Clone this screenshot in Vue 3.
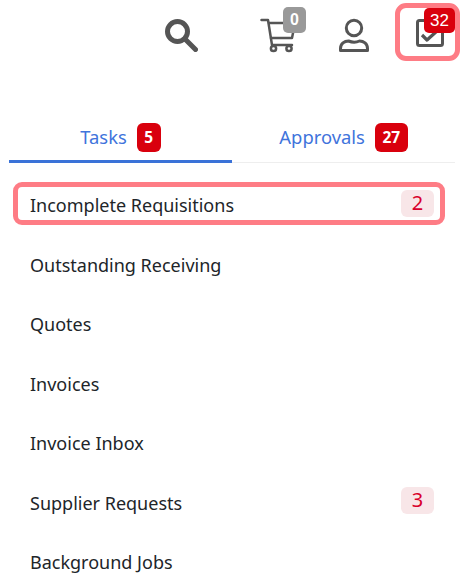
<template>
  <div class="page">
    <div class="topbar">
      <button class="icon-btn search">
        <svg width="33" height="33" viewBox="0 0 33 33" fill="none" stroke="#555" stroke-width="5">
          <circle cx="12.500" cy="12.500" r="10" />
          <path d="M20 20l10.500 10.500" stroke-linecap="round" />
        </svg>
      </button>
      <button class="icon-btn cart">
        <svg width="38" height="36" viewBox="0 0 38 36" fill="none" stroke="#555" stroke-width="2.500" stroke-linecap="round" stroke-linejoin="round">
          <path d="M1.500 2H8l4 25h20" />
          <path d="M9 5h26l-3 15H11" />
          <circle cx="13.500" cy="30.500" r="2.600" />
          <circle cx="29" cy="30.500" r="2.600" />
        </svg>
        <span class="count grey">0</span>
      </button>
      <button class="icon-btn user">
        <svg width="34" height="35" viewBox="0 0 34 35" fill="none" stroke="#555" stroke-width="3" stroke-linejoin="round">
          <circle cx="16" cy="10" r="7.700" />
          <path d="M2.500 32.500v-2c0-5 4-7.500 8-7.500 3.500 1.500 8 1.500 11 0 4 0 8 2.500 8 7.500v2z" />
        </svg>
      </button>
      <button class="icon-btn tasks">
        <svg width="30" height="30" viewBox="0 0 30 30" fill="none" stroke="#555" stroke-width="3" stroke-linejoin="round">
          <rect x="2.500" y="2.500" width="25" height="25" rx="2" />
          <path d="M7 17l5 5 10-9" stroke-width="3.200" />
        </svg>
        <span class="count red">32</span>
      </button>
    </div>

    <div class="tabs">
      <div v-for="tab in tabs" :key="tab.label" class="tab" :class="{ active: tab.active }">
        <span class="tab-label">{{ tab.label }}</span>
        <span class="tab-badge">{{ tab.count }}</span>
      </div>
    </div>

    <ul class="list">
      <li v-for="item in items" :key="item.label" class="row" :class="{ focus: item.focus }">
        <span>{{ item.label }}</span>
        <span v-if="item.count" class="pill">{{ item.count }}</span>
      </li>
    </ul>
  </div>
</template>

<script setup>
const tabs = [
  { label: 'Tasks', count: 5, active: true },
  { label: 'Approvals', count: 27 }
]

const items = [
  { label: 'Incomplete Requisitions', count: 2, focus: true },
  { label: 'Outstanding Receiving' },
  { label: 'Quotes' },
  { label: 'Invoices' },
  { label: 'Invoice Inbox' },
  { label: 'Supplier Requests', count: 3 },
  { label: 'Background Jobs' }
]
</script>

<style>
html, body {
  background: #fff;
  overflow: hidden;
}
</style>

<style scoped>
.page {
  width: 466px;
  height: 576px;
  overflow: hidden;
  font-family: "Noto Sans", "Open Sans", sans-serif;
  color: #212529;
}

.topbar {
  height: 64px;
  padding: 3px 6px 0 0;
  box-sizing: border-box;
  display: flex;
  justify-content: flex-end;
}

.icon-btn {
  position: relative;
  display: flex;
  align-items: center;
  justify-content: center;
  background: none;
  border: 0;
  padding: 7px 0 0;
  height: 58px;
  box-sizing: border-box;
}

.search { width: 33px; margin-right: 62px; }
.cart { width: 38px; margin-right: 40px; }
.user { width: 34px; margin-right: 23px; }

.tasks {
  width: 65px;
  border: 5px solid #fe7c85;
  border-radius: 11px;
  padding: 2px 0 0 5px;
}

.count {
  position: absolute;
  font-size: 16px;
  text-align: center;
  color: #fff;
  border-radius: 5px;
}

.grey {
  background: #999;
  width: 23px;
  height: 26px;
  line-height: 26px;
  top: 4px;
  left: 23px;
  font-weight: 700;
}

.red {
  background: #d9000d;
  width: 31px;
  height: 25px;
  line-height: 25px;
  font-size: 17px;
  top: 0;
  left: 24px;
}

.tabs {
  display: flex;
  margin: 52px 11px 0 9px;
  border-bottom: 1px solid #eee;
}

.tab {
  flex: 1;
  height: 46px;
  box-sizing: border-box;
  padding-bottom: 3px;
  display: flex;
  justify-content: center;
  align-items: center;
  gap: 10px;
  font-size: 18.400px;
  color: #3f74dc;
}

.tab.active {
  height: 47px;
  padding-bottom: 1px;
  margin-bottom: -1px;
  border-bottom: 3px solid #3a72d8;
}

.tab-label {
  margin-bottom: 2px;
}

.tab-badge {
  background: #d9000d;
  color: #fff;
  font-size: 15.500px;
  font-weight: 700;
  line-height: 29px;
  height: 29px;
  padding: 0 7.500px;
  border-radius: 6px;
}

.list {
  list-style: none;
  margin: 0;
  padding: 19px 21px 0 13px;
}

.row {
  height: 59.500px;
  box-sizing: border-box;
  display: flex;
  justify-content: space-between;
  align-items: center;
  padding: 0 11px 0 17px;
  font-size: 18px;
}

.row.focus {
  height: 43px;
  margin-bottom: 10px;
  border: 5px solid #fe7c85;
  border-radius: 9px;
  padding: 3px 6px 0 12px;
}

.pill {
  width: 33px;
  height: 27px;
  margin-bottom: 4px;
  line-height: 25px;
  text-align: center;
  background: #f8e6e8;
  color: #d9002b;
  font-size: 20px;
  border-radius: 6px;
}
</style>
